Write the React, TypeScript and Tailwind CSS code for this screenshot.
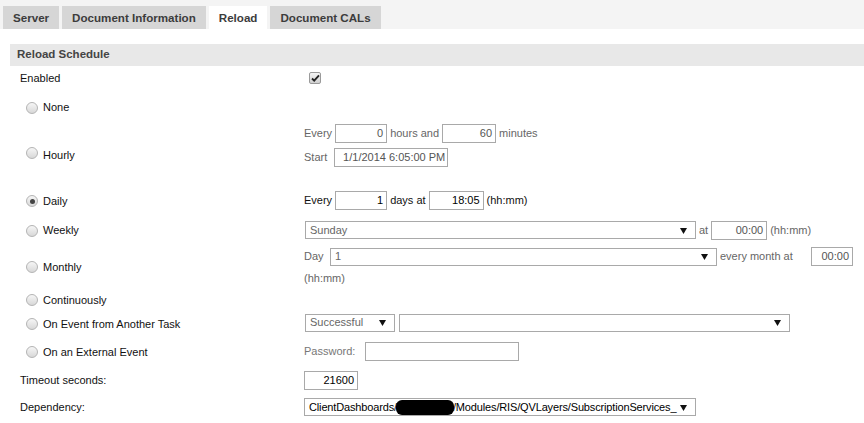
import React from "react";

const font = { fontFamily: '"Liberation Sans", Arial, sans-serif' };

function Radio({ checked = false }: { checked?: boolean }) {
    return (
        <span className="ml-[6px] mr-[5px] inline-flex h-[12px] w-[12px] shrink-0 items-center justify-center rounded-full border border-[#b4b4b4] bg-gradient-to-b from-[#f6f6f6] to-[#d8d8d8]">
            {checked && <span className="h-[5px] w-[5px] rounded-full bg-[#444]" />}
        </span>
    );
}

function Box({ value = "", w, gray = false }: { value?: string; w: string; gray?: boolean }) {
    return (
        <span
            className={`inline-flex h-[19px] items-center justify-end border border-[#a9a9a9] bg-white pr-[3px] ${w} ${gray ? "text-[#555]" : "text-black"}`}
        >
            {value}
        </span>
    );
}

function Select({ value = "", w, gray = false, children }: { value?: string; w: string; gray?: boolean; children?: React.ReactNode }) {
    return (
        <span
            className={`inline-flex h-[18px] items-center justify-between border border-[#a9a9a9] bg-white pl-[4px] pr-[8px] ${w} ${gray ? "text-[#666]" : "text-black"}`}
        >
            <span className="flex items-center whitespace-nowrap">{children ?? value}</span>
            <svg width="7" height="7" viewBox="0 0 7 7" className="shrink-0">
                <path d="M0 1h7L3.5 7z" fill="#111" />
            </svg>
        </span>
    );
}

function Row({ h, label, radio, checked, children, labelPad = "" }: { h: string; label: string; radio?: boolean; checked?: boolean; children?: React.ReactNode; labelPad?: string }) {
    return (
        <div className={`flex ${h}`}>
            <div className={`flex w-[304px] shrink-0 items-center pl-[20px] ${labelPad}`}>
                {radio && <Radio checked={checked} />}
                <span>{label}</span>
            </div>
            <div className="flex flex-1 items-center">{children}</div>
        </div>
    );
}

export default function App() {
    const tabs = ["Server", "Document Information", "Reload", "Document CALs"];
    return (
        <div className="h-[423px] w-[864px] overflow-hidden bg-white text-[11px] text-[#111]" style={font}>
            <div className="flex h-[29px] items-end gap-[3px] bg-[#f4f4f4] pl-[3px]">
                {tabs.map((t) => (
                    <div
                        key={t}
                        className={`flex h-[23px] items-center px-[10px] text-[11.6px] font-bold text-[#3c3c3c] ${t === "Reload" ? "bg-white" : "bg-[#d6d6d6]"}`}
                    >
                        {t}
                    </div>
                ))}
            </div>

            <div className="mt-[15px] ml-[10px] flex h-[22px] items-center bg-[#e8e8e8] pl-[7px] text-[11.5px] font-bold text-[#444]">
                Reload Schedule
            </div>

            <div className="mt-[1px]">
                <Row h="h-[22px]" label="Enabled">
                    <span className="ml-[5px] flex h-[12px] w-[12px] items-center justify-center rounded-[2px] border border-[#9a9a9a] bg-gradient-to-b from-[#f4f4f4] to-[#d0d0d0]">
                        <svg width="9" height="8" viewBox="0 0 9 8">
                            <path d="M1 4.5l2.2 2.2L8 1.3" stroke="#222" strokeWidth="1.8" fill="none" />
                        </svg>
                    </span>
                </Row>

                <Row h="h-[33px]" label="None" radio labelPad="pt-[4px]" />

                <div className="flex h-[60px]">
                    <div className="flex w-[304px] shrink-0 items-start pl-[20px] pt-[25px]">
                        <Radio />
                        <span>Hourly</span>
                    </div>
                    <div className="flex flex-col gap-[5px] pt-[2px] text-[#666]">
                        <div className="flex items-center gap-[3px]">
                            <span>Every</span>
                            <Box value="0" w="w-[52px]" gray />
                            <span>hours and</span>
                            <Box value="60" w="w-[54px]" gray />
                            <span>minutes</span>
                        </div>
                        <div className="flex items-center gap-[7px]">
                            <span>Start</span>
                            <span className="inline-flex h-[19px] w-[114px] items-center justify-end border border-[#a9a9a9] pr-[2px] text-[#555]">
                                1/1/2014 6:05:00 PM
                            </span>
                        </div>
                    </div>
                </div>

                <Row h="h-[36px]" label="Daily" radio checked labelPad="pt-[2px]">
                    <div className="flex items-center gap-[3px]">
                        <span>Every</span>
                        <Box value="1" w="w-[52px]" />
                        <span>days at</span>
                        <Box value="18:05" w="w-[55px]" />
                        <span>(hh:mm)</span>
                    </div>
                </Row>

                <Row h="h-[24px]" label="Weekly" radio labelPad="pt-[1px]">
                    <div className="flex items-center gap-[3px] text-[#666]">
                        <span className="ml-[1px]">
                            <Select value="Sunday" w="w-[391px]" gray />
                        </span>
                        <span>at</span>
                        <Box value="00:00" w="w-[56px]" gray />
                        <span>(hh:mm)</span>
                    </div>
                </Row>

                <div className="flex h-[48px]">
                    <div className="flex w-[304px] shrink-0 items-center pl-[20px] pt-[2px]">
                        <Radio />
                        <span>Monthly</span>
                    </div>
                    <div className="flex flex-col pt-[5px] text-[#666]">
                        <div className="flex items-center">
                            <span className="w-[26px]">Day</span>
                            <Select value="1" w="w-[387px]" gray />
                            <span className="w-[94px] pl-[3px]">every month at</span>
                            <Box value="00:00" w="w-[42px]" gray />
                        </div>
                        <span className="mt-[4px]">(hh:mm)</span>
                    </div>
                </div>

                <Row h="h-[20px]" label="Continuously" radio />

                <Row h="h-[28px]" label="On Event from Another Task" radio>
                    <div className="flex items-center gap-[4px] pb-[3px] pl-[1px]">
                        <Select value="Successful" w="w-[90px]" gray />
                        <Select w="w-[391px]" />
                    </div>
                </Row>

                <Row h="h-[26px]" label="On an External Event" radio labelPad="pt-[2px]">
                    <div className="flex items-center gap-[10px] text-[#777]">
                        <span>Password:</span>
                        <Box w="w-[154px]" />
                    </div>
                </Row>

                <Row h="h-[32px]" label="Timeout seconds:">
                    <Box value="21600" w="w-[54px]" />
                </Row>

                <Row h="h-[22px]" label="Dependency:">
                    <Select w="w-[392px]">
                        <span className="tracking-[-0.15px]">ClientDashboards/</span>
                        <span className="mx-[-1px] inline-block h-[15px] w-[58px] rounded-[6px] bg-black" />
                        <span className="tracking-[-0.15px]">/Modules/RIS/QVLayers/SubscriptionServices_</span>
                    </Select>
                </Row>
            </div>
        </div>
    );
}
